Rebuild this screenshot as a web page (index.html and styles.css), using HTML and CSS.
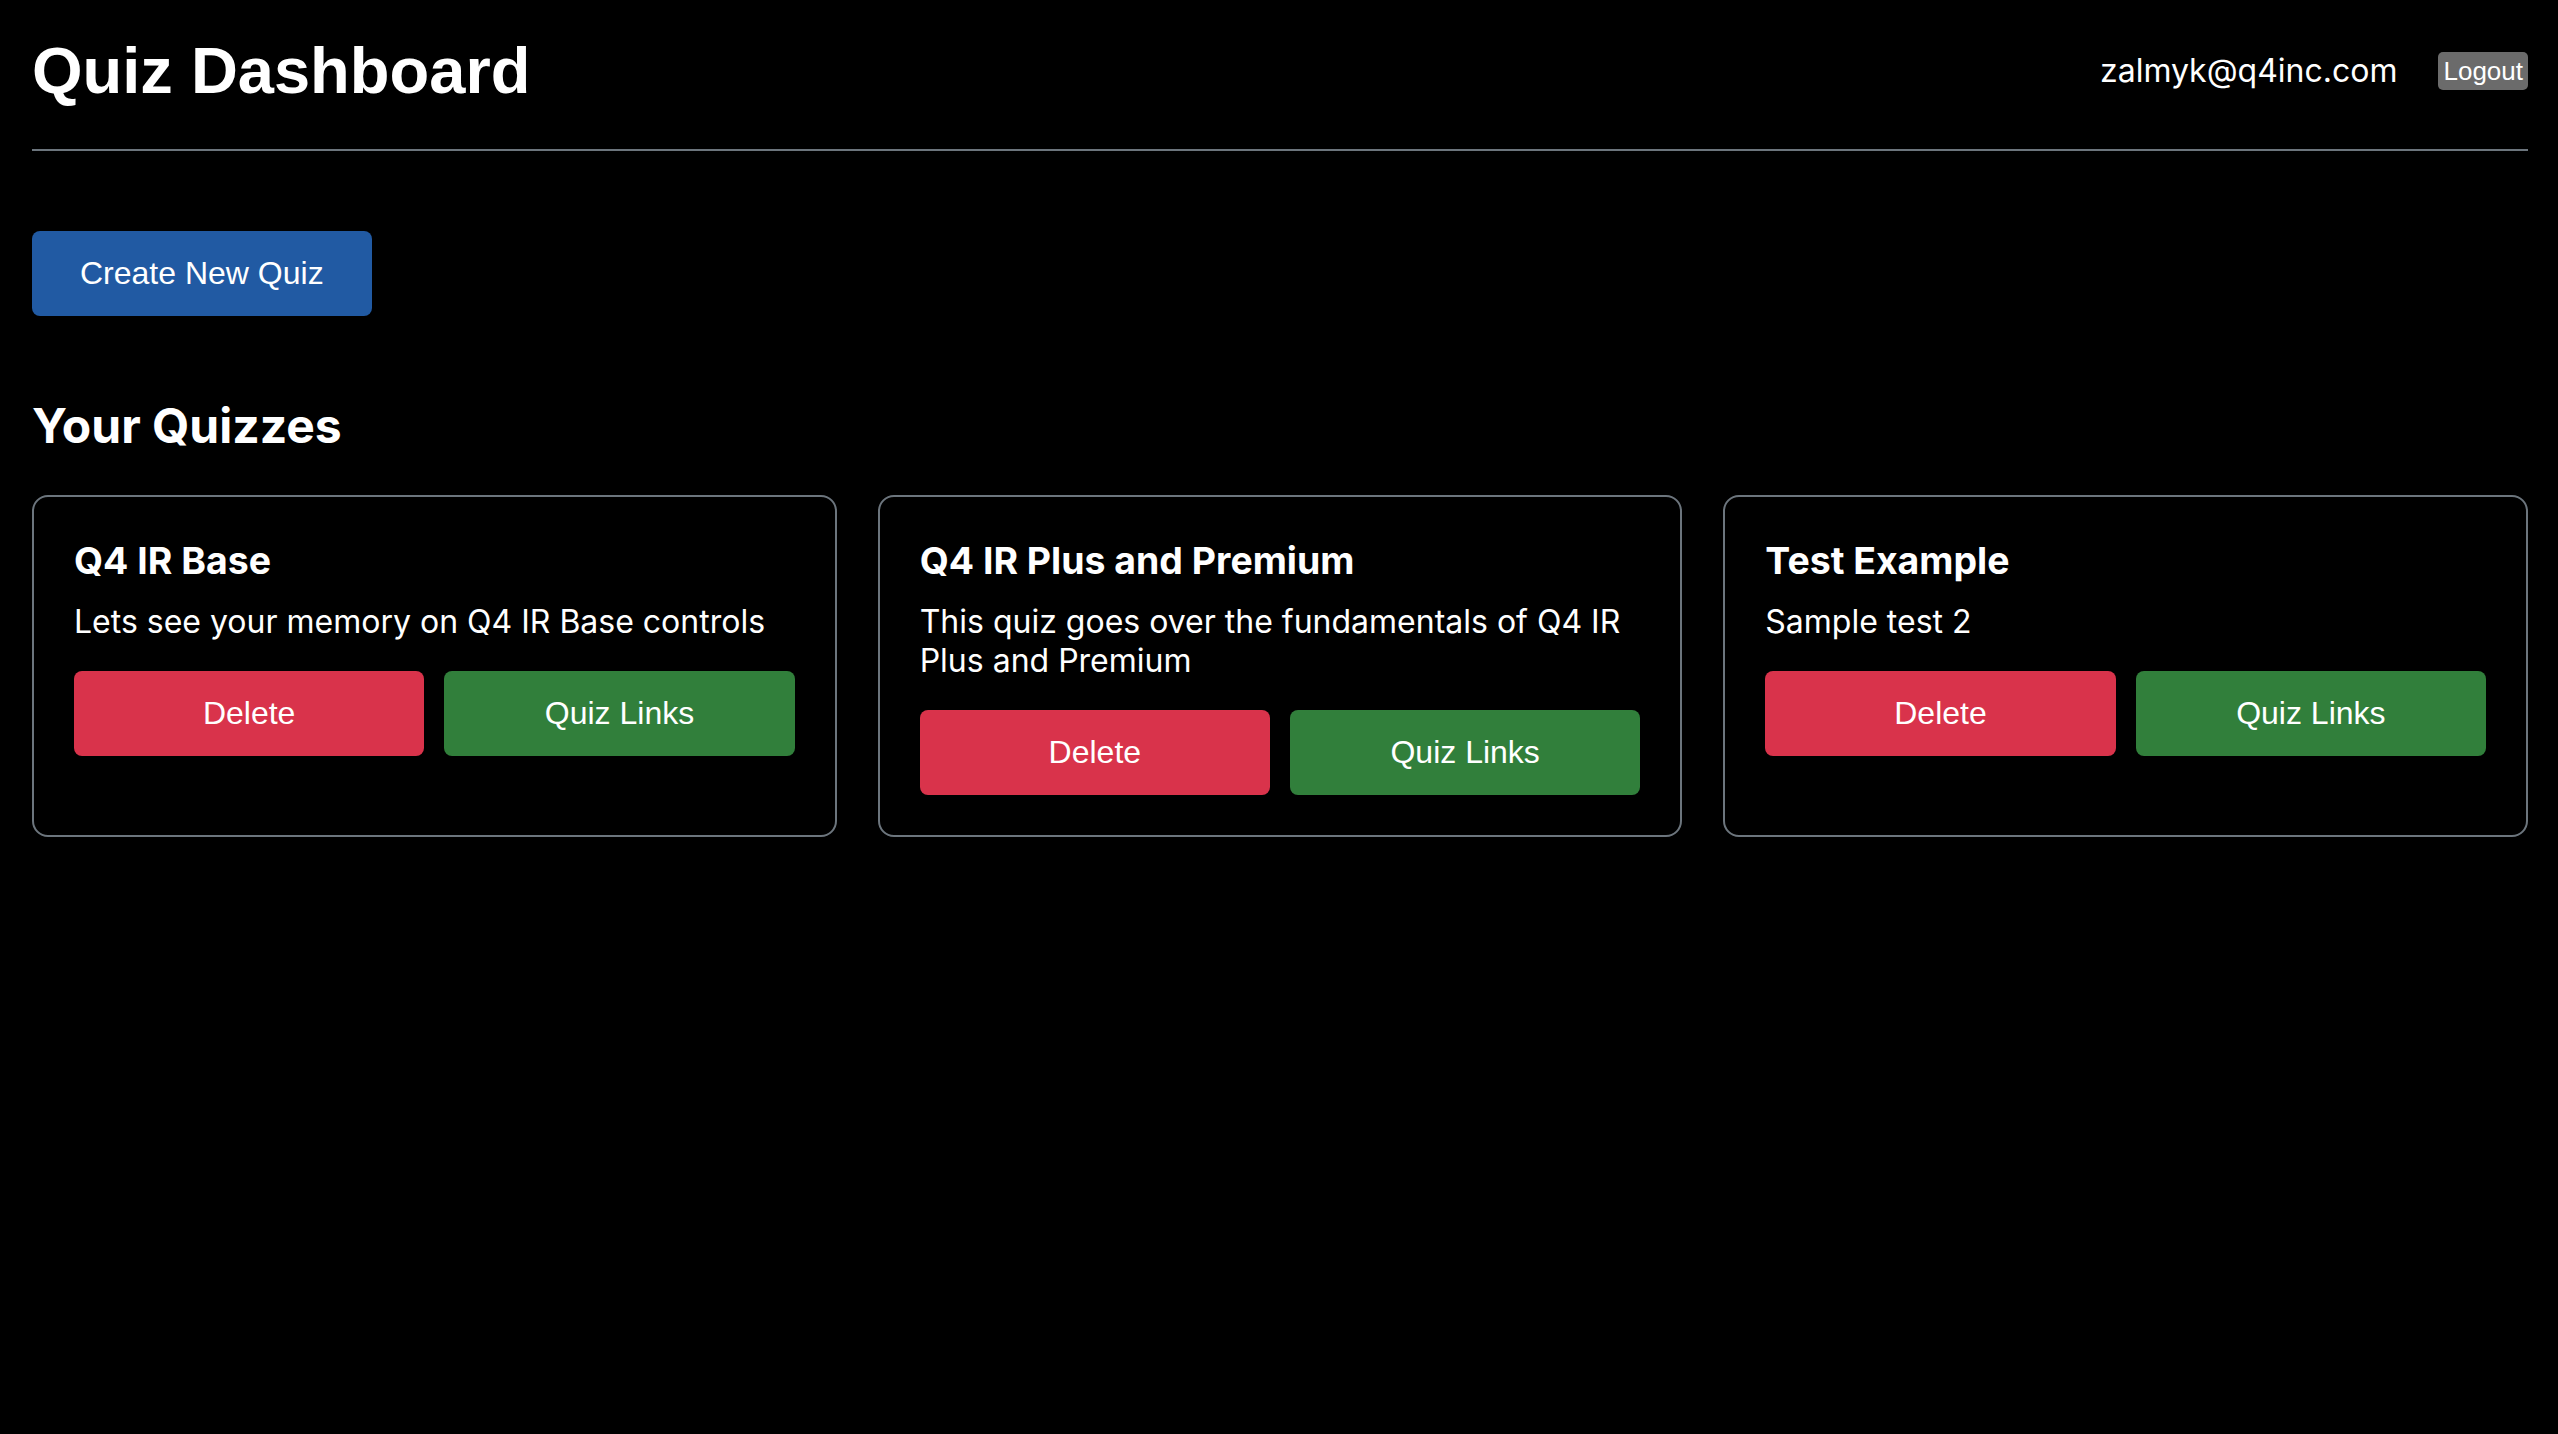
FILE: index.html
```html
<!DOCTYPE html>
<html lang="en">
<head>
<meta charset="utf-8">
<title>Quiz Dashboard</title>
<link rel="stylesheet" href="styles.css">
</head>
<body>
<div class="page">
  <header class="header">
    <h1 class="title">Quiz Dashboard</h1>
    <div class="user">
      <span class="email">zalmyk@q4inc.com</span>
      <button class="logout">Logout</button>
    </div>
  </header>

  <button class="btn btn-create">Create New Quiz</button>

  <h2 class="section-title">Your Quizzes</h2>

  <div class="grid">
    <div class="card">
      <h3 class="card-title">Q4 IR Base</h3>
      <p class="card-desc">Lets see your memory on Q4 IR Base controls</p>
      <div class="actions">
        <button class="btn btn-delete">Delete</button>
        <button class="btn btn-links">Quiz Links</button>
      </div>
    </div>
    <div class="card">
      <h3 class="card-title">Q4 IR Plus and Premium</h3>
      <p class="card-desc">This quiz goes over the fundamentals of Q4 IR Plus and Premium</p>
      <div class="actions">
        <button class="btn btn-delete">Delete</button>
        <button class="btn btn-links">Quiz Links</button>
      </div>
    </div>
    <div class="card">
      <h3 class="card-title">Test Example</h3>
      <p class="card-desc">Sample test 2</p>
      <div class="actions">
        <button class="btn btn-delete">Delete</button>
        <button class="btn btn-links">Quiz Links</button>
      </div>
    </div>
  </div>
</div>
</body>
</html>
```

FILE: styles.css
```css
html, body {
  margin: 0;
  padding: 0;
  background: #000;
  color: #fff;
}

body {
  font-family: Inter, "Noto Sans", sans-serif;
  min-height: 1434px;
}

.page {
  padding: 34px 30px 0 32px;
}

.header {
  display: flex;
  justify-content: space-between;
  align-items: center;
  padding-bottom: 42px;
  border-bottom: 2px solid #6c757d;
}

.title {
  margin: 0;
  font-family: "Liberation Sans", Arial, sans-serif;
  font-weight: 700;
  font-size: 65px;
  line-height: 73px;
}

.user {
  display: flex;
  align-items: center;
  gap: 41px;
}

.email {
  font-size: 32px;
}

.logout {
  font-family: "Liberation Sans", Arial, sans-serif;
  font-size: 26px;
  line-height: 30px;
  color: #fff;
  background: #6b6b6b;
  border: none;
  border-radius: 5px;
  padding: 4px 5px;
}

.btn {
  font-family: "Liberation Sans", Arial, sans-serif;
  font-size: 32px;
  line-height: 37px;
  color: #fff;
  border: none;
  border-radius: 8px;
  padding: 24px 48px;
  cursor: pointer;
}

.btn-create {
  display: block;
  margin-top: 80px;
  background: #215aa3;
}

.section-title {
  margin: 80px 0 40px;
  font-size: 48px;
  font-weight: 700;
  line-height: normal;
}

.grid {
  display: grid;
  grid-template-columns: repeat(3, 1fr);
  gap: 41px;
}

.card {
  border: 2px solid #6c757d;
  border-radius: 16px;
  padding: 42px 40px 40px;
}

.card-title {
  margin: 0 0 19px;
  font-size: 37.44px;
  font-weight: 700;
  line-height: 44px;
}

.card-desc {
  margin: 0 0 30px;
  font-size: 32px;
  line-height: normal;
}

.actions {
  display: flex;
  gap: 20px;
}

.actions .btn {
  flex: 1;
  padding: 24px 0;
}

.btn-delete {
  background: #d9334b;
}

.btn-links {
  background: #317f3b;
}
```
